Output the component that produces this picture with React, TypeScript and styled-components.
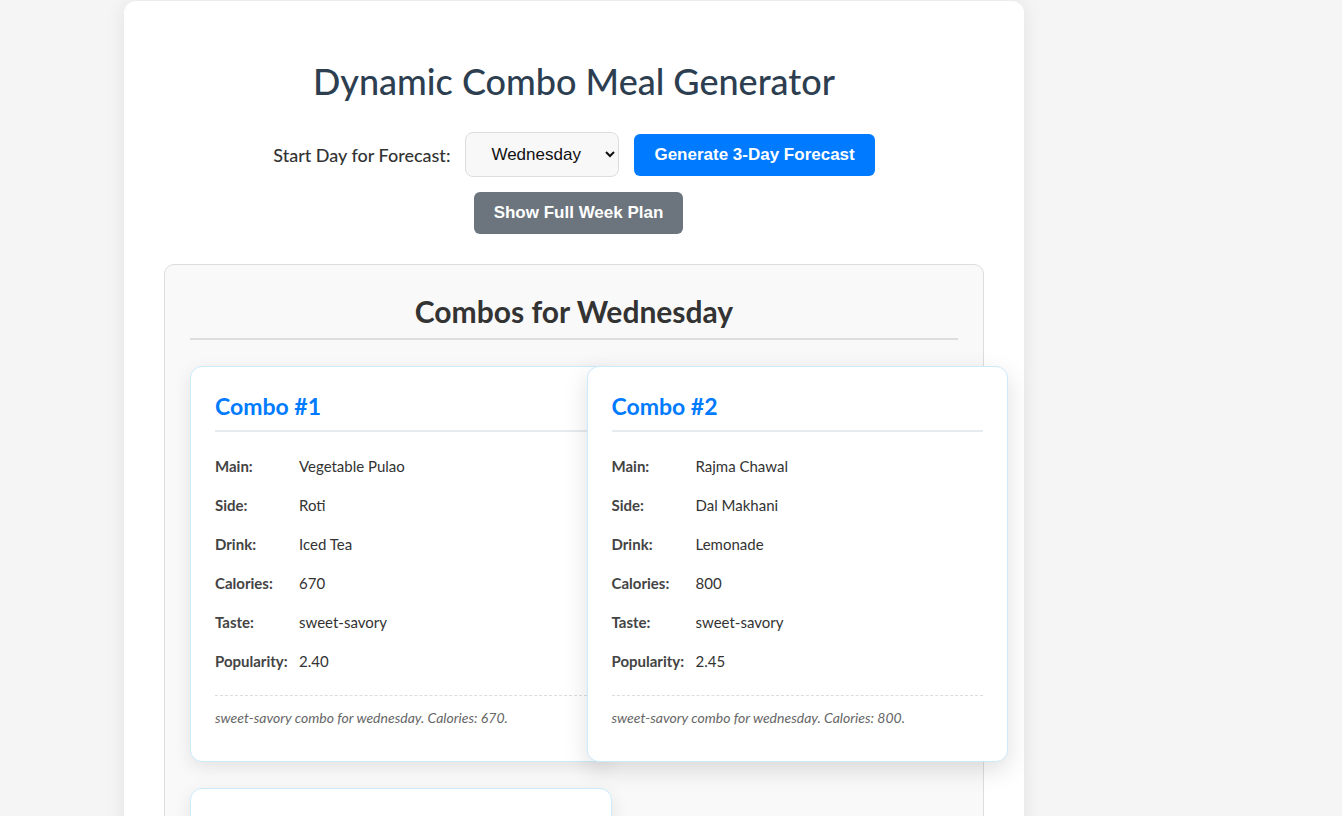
import React, { useState } from 'react';
import styled, { createGlobalStyle } from 'styled-components';

const GlobalStyle = createGlobalStyle`
  body {
    margin: 0;
    background-color: #f4f5f4;
    font-family: 'Segoe UI', Lato, 'Noto Sans', sans-serif;
    color: #333;
  }
`;

const Page = styled.div`
  padding-left: 124px;
  padding-top: 1px;
`;

const Container = styled.div`
  width: 900px;
  box-sizing: border-box;
  background-color: white;
  border-radius: 12px;
  padding: 40px;
  box-shadow: 0 0 20px rgba(0, 0, 0, 0.08);
`;

const Title = styled.h1`
  margin: 18px 0 29px;
  text-align: center;
  color: #2c3e50;
  font-size: 36px;
  font-weight: 500;
  line-height: 44px;
`;

const Controls = styled.div`
  display: flex;
  flex-direction: column;
  align-items: center;
  gap: 15px;
`;

const ControlRow = styled.div`
  display: flex;
  justify-content: center;
  align-items: center;
  gap: 15px;
`;

const Label = styled.label`
  font-size: 18px;
  font-weight: 500;
  color: #333;
`;

const DaySelect = styled.select`
  width: 154px;
  height: 45px;
  padding: 0 10px 0 21px;
  font-family: 'Liberation Sans', Arial, sans-serif;
  font-size: 17px;
  color: #111;
  background-color: #f8f8f8;
  border: 1px solid #ddd;
  border-radius: 8px;
`;

const ActionButton = styled.button<{ $variant?: 'primary' | 'secondary' }>`
  height: 42px;
  padding: 0 20px;
  border: none;
  border-radius: 6px;
  font-family: 'Liberation Sans', Arial, sans-serif;
  font-size: 17px;
  font-weight: 700;
  color: white;
  cursor: pointer;
  background-color: ${(p) => (p.$variant === 'secondary' ? '#6c757d' : '#007bff')};
  margin-left: ${(p) => (p.$variant === 'secondary' ? '9px' : '0')};
`;

const Section = styled.section`
  margin-top: 30px;
  background-color: #f9f9f9;
  border: 1px solid #ddd;
  border-radius: 10px;
  padding: 25px;
`;

const SectionTitle = styled.h2`
  margin: 0 0 26px;
  padding: 2px 0 8px;
  border-bottom: 2px solid #ddd;
  text-align: center;
  color: #333;
  font-size: 30px;
  font-weight: 700;
  line-height: 38px;
`;

const CardGrid = styled.div`
  display: grid;
  grid-template-columns: repeat(2, minmax(0, 1fr));
  gap: 26px 25px;
`;

const Card = styled.div<{ $lifted?: boolean }>`
  width: 100%;
  background-color: white;
  border: 1px solid #cdeafc;
  border-radius: 12px;
  padding: 24px;
  box-shadow: ${(p) =>
    p.$lifted ? '0 8px 24px rgba(0, 0, 0, 0.13)' : '0 5px 18px rgba(0, 0, 0, 0.09)'};
`;

const CardTitle = styled.h3`
  margin: 0 0 24px;
  padding-bottom: 9px;
  border-bottom: 2px solid #e6ebf0;
  color: #007bff;
  font-size: 23px;
  font-weight: 700;
  line-height: 30px;
`;

const DetailRow = styled.div`
  display: flex;
  font-size: 15px;
  line-height: 21px;
  margin-bottom: 18px;
`;

const DetailLabel = styled.span`
  flex: 0 0 84px;
  font-weight: 700;
  color: #444;
`;

const DetailValue = styled.span`
  color: #333;
`;

const Note = styled.p`
  margin: 23px 0 9px;
  padding-top: 12px;
  border-top: 1px dashed #ddd;
  font-size: 14px;
  line-height: 20px;
  font-style: italic;
  color: #666;
`;

type Combo = {
  main: string;
  side: string;
  drink: string;
  calories: number;
  taste: string;
  popularity: number;
};

const combos: Combo[] = [
  { main: 'Vegetable Pulao', side: 'Roti', drink: 'Iced Tea', calories: 670, taste: 'sweet-savory', popularity: 2.4 },
  { main: 'Rajma Chawal', side: 'Dal Makhani', drink: 'Lemonade', calories: 800, taste: 'sweet-savory', popularity: 2.45 },
  { main: 'Paneer Tikka', side: 'Naan', drink: 'Lassi', calories: 720, taste: 'spicy', popularity: 2.3 },
];

const days = ['Monday', 'Tuesday', 'Wednesday', 'Thursday', 'Friday', 'Saturday', 'Sunday'];

const ComboCard: React.FC<{ combo: Combo; index: number; day: string; lifted?: boolean }> = ({
  combo,
  index,
  day,
  lifted,
}) => (
  <Card $lifted={lifted}>
    <CardTitle>Combo #{index + 1}</CardTitle>
    <DetailRow><DetailLabel>Main:</DetailLabel><DetailValue>{combo.main}</DetailValue></DetailRow>
    <DetailRow><DetailLabel>Side:</DetailLabel><DetailValue>{combo.side}</DetailValue></DetailRow>
    <DetailRow><DetailLabel>Drink:</DetailLabel><DetailValue>{combo.drink}</DetailValue></DetailRow>
    <DetailRow><DetailLabel>Calories:</DetailLabel><DetailValue>{combo.calories}</DetailValue></DetailRow>
    <DetailRow><DetailLabel>Taste:</DetailLabel><DetailValue>{combo.taste}</DetailValue></DetailRow>
    <DetailRow><DetailLabel>Popularity:</DetailLabel><DetailValue>{combo.popularity.toFixed(2)}</DetailValue></DetailRow>
    <Note>
      {combo.taste} combo for {day.toLowerCase()}. Calories: {combo.calories}.
    </Note>
  </Card>
);

const App: React.FC = () => {
  const [day, setDay] = useState('Wednesday');

  return (
    <Page>
      <GlobalStyle />
      <Container>
        <Title>Dynamic Combo Meal Generator</Title>
        <Controls>
          <ControlRow>
            <Label htmlFor="start-day">Start Day for Forecast:</Label>
            <DaySelect id="start-day" value={day} onChange={(e) => setDay(e.target.value)}>
              {days.map((d) => (
                <option key={d} value={d}>{d}</option>
              ))}
            </DaySelect>
            <ActionButton>Generate 3-Day Forecast</ActionButton>
          </ControlRow>
          <ActionButton $variant="secondary">Show Full Week Plan</ActionButton>
        </Controls>
        <Section>
          <SectionTitle>Combos for {day}</SectionTitle>
          <CardGrid>
            {combos.map((c, i) => (
              <ComboCard key={i} combo={c} index={i} day={day} lifted={i === 1} />
            ))}
          </CardGrid>
        </Section>
      </Container>
    </Page>
  );
};

export default App;
